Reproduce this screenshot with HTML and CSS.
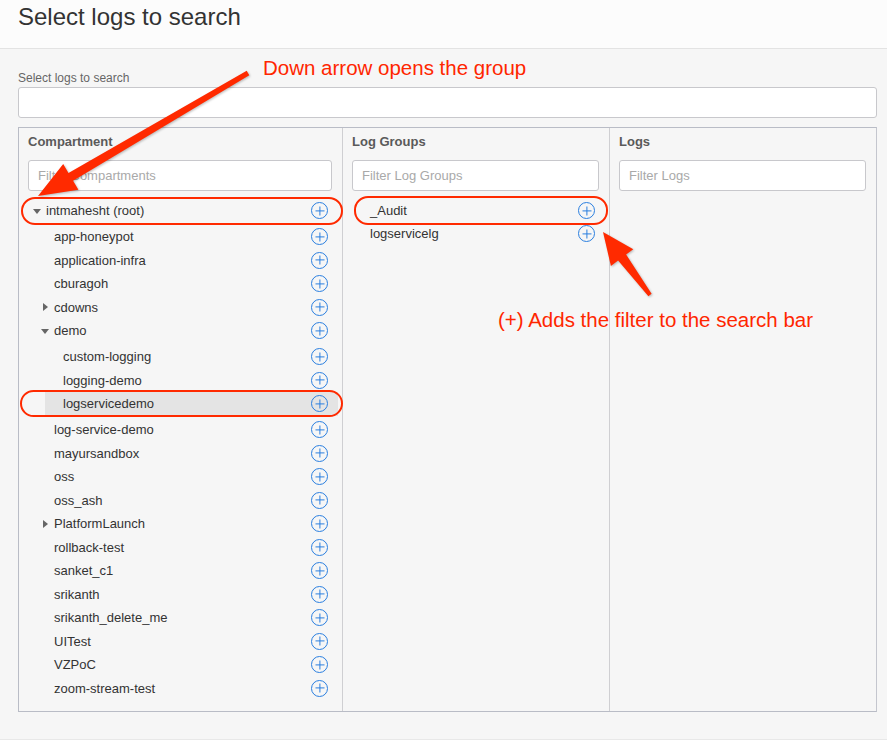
FILE: index.html
```html
<!DOCTYPE html>
<html>
<head>
<meta charset="utf-8">
<link rel="stylesheet" href="styles.css">
</head>
<body>
<div class="page">
  <header class="header"><h1 class="title">Select logs to search</h1></header>
  <main class="main">
    <label class="label">Select logs to search</label>
    <div class="search"></div>
    <div class="columns">
      <section class="col col-comp">
        <div class="col-title">Compartment</div>
        <div class="filter">Filter Compartments</div>
        <ul class="tree">
          <li class="row lv0"><span class="tog down"></span><span class="name">intmahesht (root)</span><span class="plus"></span></li>
          <li class="row lv1 gap"><span class="tog"></span><span class="name">app-honeypot</span><span class="plus"></span></li>
          <li class="row lv1"><span class="tog"></span><span class="name">application-infra</span><span class="plus"></span></li>
          <li class="row lv1"><span class="tog"></span><span class="name">cburagoh</span><span class="plus"></span></li>
          <li class="row lv1"><span class="tog right"></span><span class="name">cdowns</span><span class="plus"></span></li>
          <li class="row lv1"><span class="tog down"></span><span class="name">demo</span><span class="plus"></span></li>
          <li class="row lv2 gap"><span class="tog"></span><span class="name">custom-logging</span><span class="plus"></span></li>
          <li class="row lv2"><span class="tog"></span><span class="name">logging-demo</span><span class="plus"></span></li>
          <li class="row lv2 selected"><span class="tog"></span><span class="name">logservicedemo</span><span class="plus"></span></li>
          <li class="row lv1 gap"><span class="tog"></span><span class="name">log-service-demo</span><span class="plus"></span></li>
          <li class="row lv1"><span class="tog"></span><span class="name">mayursandbox</span><span class="plus"></span></li>
          <li class="row lv1"><span class="tog"></span><span class="name">oss</span><span class="plus"></span></li>
          <li class="row lv1"><span class="tog"></span><span class="name">oss_ash</span><span class="plus"></span></li>
          <li class="row lv1"><span class="tog right"></span><span class="name">PlatformLaunch</span><span class="plus"></span></li>
          <li class="row lv1"><span class="tog"></span><span class="name">rollback-test</span><span class="plus"></span></li>
          <li class="row lv1"><span class="tog"></span><span class="name">sanket_c1</span><span class="plus"></span></li>
          <li class="row lv1"><span class="tog"></span><span class="name">srikanth</span><span class="plus"></span></li>
          <li class="row lv1"><span class="tog"></span><span class="name">srikanth_delete_me</span><span class="plus"></span></li>
          <li class="row lv1"><span class="tog"></span><span class="name">UITest</span><span class="plus"></span></li>
          <li class="row lv1"><span class="tog"></span><span class="name">VZPoC</span><span class="plus"></span></li>
          <li class="row lv1"><span class="tog"></span><span class="name">zoom-stream-test</span><span class="plus"></span></li>
        </ul>
      </section>
      <section class="col col-groups">
        <div class="col-title">Log Groups</div>
        <div class="filter">Filter Log Groups</div>
        <ul class="tree">
          <li class="row lv0"><span class="tog"></span><span class="name">_Audit</span><span class="plus"></span></li>
          <li class="row lv0 tight"><span class="tog"></span><span class="name">logservicelg</span><span class="plus"></span></li>
        </ul>
      </section>
      <section class="col col-logs">
        <div class="col-title">Logs</div>
        <div class="filter">Filter Logs</div>
      </section>
    </div>
  </main>
  <footer class="footer"></footer>

  <div class="annot">
    <div class="note note-1">Down arrow opens the group</div>
    <div class="note note-2">(+) Adds the filter to the search bar</div>
    <div class="oval oval-root"></div>
    <div class="oval oval-sel"></div>
    <div class="oval oval-audit"></div>
    <svg class="arrows" width="887" height="740" viewBox="0 0 887 740">
      <polygon fill="#ff2a00" points="246.7,70.8 68.5,172.9 63.2,163.9 38,196 78.4,189.7 73.1,180.7 249.3,75.2"/>
      <polygon fill="#ff2a00" points="648.4,296.2 618.1,260.6 610.9,266 603,232 633.3,249.2 626.1,254.6 651.6,293.8"/>
    </svg>
  </div>
</div>
</body>
</html>
```

FILE: styles.css
```css
* { box-sizing: border-box; }
html, body { margin: 0; padding: 0; }
body {
  font-family: "Liberation Sans", Arial, sans-serif;
  background: #f6f6f6;
  color: #333;
  width: 887px;
  height: 740px;
  overflow: hidden;
}
.page { position: relative; width: 887px; height: 740px; }

.header {
  height: 49px;
  background: #fcfcfc;
  border-bottom: 1px solid #e3e3e3;
  padding: 3px 18px 0;
}
.title {
  margin: 0;
  font-size: 24px;
  font-weight: normal;
  line-height: 28px;
  color: #333;
}

.main { padding: 21px 10px 0 18px; }
.label {
  display: block;
  font-size: 12px;
  line-height: 16px;
  color: #666;
  margin-bottom: 1px;
}
.search {
  height: 31px;
  background: #fff;
  border: 1px solid #c8c8cc;
  border-radius: 3px;
}
.columns {
  margin-top: 9px;
  height: 585px;
  display: grid;
  grid-template-columns: 323px 267px 1fr;
  border: 1px solid #b9bcc6;
  border-right-color: #c4c6ce;
}
.col { padding: 6px 10px 0 9px; }
.col + .col { border-left: 1px solid #cfcfd2; }
.col-title {
  font-size: 13px;
  font-weight: bold;
  color: #5a5a5a;
  line-height: 16px;
  height: 16px;
}
.filter {
  margin-top: 10px;
  height: 31px;
  background: #fff;
  border: 1px solid #c8c8cc;
  border-radius: 3px;
  font-size: 13px;
  line-height: 29px;
  color: #a9a9a9;
  padding-left: 9px;
}
.tree { list-style: none; margin: 8px -6px 0 0; padding: 0; }
.row {
  display: flex;
  align-items: center;
  height: 23.5px;
  font-size: 13px;
  color: #333;
  padding-right: 10px;
}
.row.gap { margin-top: 2.5px; }
.row.tight { height: 24px; margin-top: -1px; }
.lv0 { margin-left: 0; }
.lv1 { margin-left: 8px; }
.lv2 { margin-left: 17px; }
.row.selected { background: #e4e4e4; }
.tog { width: 18px; flex: none; position: relative; height: 10px; }
.tog.down::after {
  content: "";
  position: absolute;
  left: 5px; top: 3px;
  border-left: 4px solid transparent;
  border-right: 4px solid transparent;
  border-top: 5px solid #666;
}
.tog.right::after {
  content: "";
  position: absolute;
  left: 7px; top: 1px;
  border-top: 4px solid transparent;
  border-bottom: 4px solid transparent;
  border-left: 5px solid #666;
}
.name { flex: 1; }
.plus {
  width: 17px; height: 17px;
  border: 1.2px solid #2a7fe0;
  border-radius: 50%;
  position: relative;
  flex: none;
}
.plus::before, .plus::after {
  content: "";
  position: absolute;
  background: #2a7fe0;
  left: 50%; top: 50%;
  transform: translate(-50%, -50%);
}
.plus::before { width: 9px; height: 1.2px; }
.plus::after { width: 1.2px; height: 9px; }

.footer {
  margin-top: 27px;
  border-top: 1px solid #e8e8e8;
  height: 10px;
  background: #f6f6f6;
}

.annot { position: absolute; inset: 0; pointer-events: none; }
.note {
  position: absolute;
  font-size: 20.5px;
  color: #ff2600;
  line-height: 22px;
  white-space: nowrap;
}
.note-1 { left: 263px; top: 57px; }
.note-2 { left: 498px; top: 309px; }
.oval {
  position: absolute;
  border: 2.5px solid #ff2a00;
  border-radius: 14px;
}
.oval-root { left: 21px; top: 197px; width: 322px; height: 28px; }
.oval-sel { left: 20px; top: 390px; width: 323px; height: 27px; }
.oval-audit { left: 354px; top: 196px; width: 254px; height: 29px; }
.arrows { position: absolute; left: 0; top: 0; filter: drop-shadow(1px 1px 1px rgba(0,0,0,0.25)); }
```
